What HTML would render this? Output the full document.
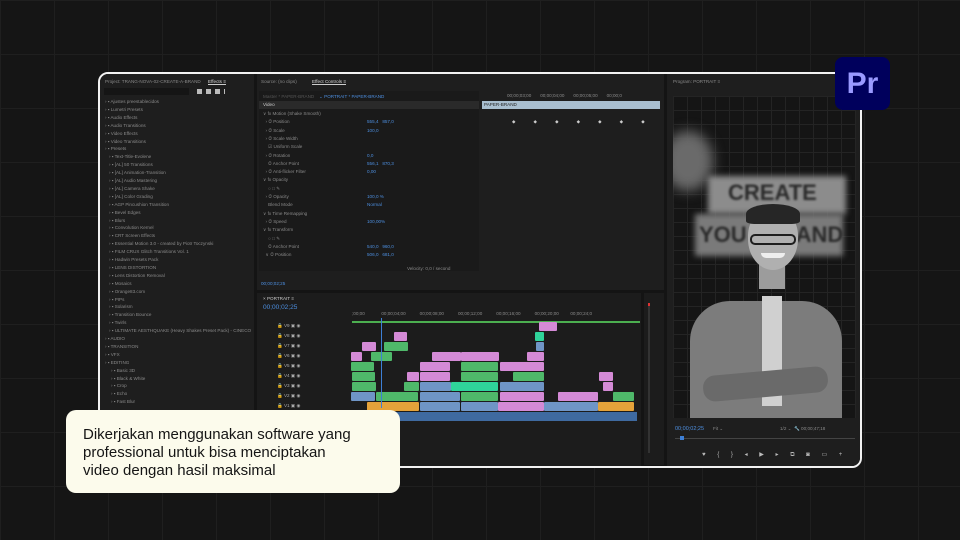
<!DOCTYPE html>
<html><head><meta charset="utf-8"><style>
*{margin:0;padding:0;box-sizing:border-box}
body{width:960px;height:540px;overflow:hidden;background:#151515;font-family:"Liberation Sans",sans-serif;position:relative}
.grid{position:absolute;inset:0;background-image:linear-gradient(#242424 1px,transparent 1px),linear-gradient(90deg,#242424 1px,transparent 1px);background-size:54px 54px;opacity:.7}
.win{position:absolute;left:98px;top:72px;width:764px;height:396px;border:2.5px solid #f2f2f2;border-radius:10px;background:#141414;overflow:hidden}
.p{position:absolute;background:#1f1f1f}
.t{position:absolute;font-size:4.6px;color:#8a8a8a;white-space:nowrap}
.b{color:#4d8fe0}
.c{position:absolute;height:9px;border-radius:1px}
.pk{background:#d48ad6}.gr{background:#4fb86a}.bl{background:#6f95c6}.or{background:#e4a23a}.tq{background:#2fd39a}
</style></head><body>
<div class="grid"></div>
<div class="win">
 <div class="p" style="left:0;top:0;width:154px;height:392px;background:#1e1e1e">
  <div class="t" style="left:5px;top:5px">Project: TRANG-NOVA-02-CREATE-A-BRAND</div>
  <div class="t" style="left:108px;top:5px;color:#ddd;border-bottom:1px solid #ccc">Effects ≡</div>
  <div style="position:absolute;left:4px;top:14px;width:85px;height:7px;background:#151515"></div>
  <div style="position:absolute;left:97px;top:15px;width:28px;height:5px;background:repeating-linear-gradient(90deg,#bbb 0 5px,transparent 5px 9px)"></div>
  <div id="list"></div>
 </div>
 <div class="p" style="left:157px;top:0;width:407px;height:216px;background:#1e1e1e">
  <div class="t" style="left:4px;top:5px">Source: (no clips)</div>
  <div class="t" style="left:55px;top:5px;color:#ddd;border-bottom:1px solid #ccc">Effect Controls ≡</div>
  <div style="position:absolute;left:2px;top:17px;width:220px;height:180px;background:#1a1a1a"></div>
  <div class="t" style="left:6px;top:20px;color:#555">Master * PAPER-BRAND</div>
  <div class="t b" style="left:62px;top:20px">⌄ PORTRAIT * PAPER-BRAND</div>
  <div style="position:absolute;left:2px;top:27px;width:220px;height:8px;background:#2a2a2a"></div>
  <div class="t" style="left:6px;top:28px;color:#ccc">Video</div>
  <div id="ec"></div>
  <div style="position:absolute;left:225px;top:27px;width:178px;height:8px;background:#a9bfd0"></div>
  <div class="t" style="left:227px;top:28px;color:#222">PAPER-BRAND</div>
  <div class="t" style="left:250px;top:19px">00;00;03;00 &nbsp; &nbsp; &nbsp; 00;00;04;00 &nbsp; &nbsp; &nbsp; 00;00;05;00 &nbsp; &nbsp; &nbsp; 00;00;0</div>
  <div class="t" style="left:255px;top:45px;color:#ccc;letter-spacing:18px">◆◆◆◆◆◆◆</div>
  <div class="t b" style="left:4px;top:207px">00;00;02;25</div>
 </div>
 <div class="p" style="left:157px;top:219px;width:384px;height:180px;background:#1c1c1c">
  <div class="t" style="left:6px;top:3px;color:#ccc">× PORTRAIT ≡</div>
  <div class="t b" style="left:6px;top:11px;font-size:6.5px">00;00;02;25</div>
  <div style="position:absolute;left:95px;top:28px;width:288px;height:2px;background:#4caf50"></div>
  <div class="t" style="left:95px;top:18px">;00;00 &nbsp; &nbsp; &nbsp; &nbsp; &nbsp; &nbsp; 00;00;04;00 &nbsp; &nbsp; &nbsp; &nbsp; &nbsp; 00;00;08;00 &nbsp; &nbsp; &nbsp; &nbsp; &nbsp; 00;00;12;00 &nbsp; &nbsp; &nbsp; &nbsp; &nbsp; 00;00;16;00 &nbsp; &nbsp; &nbsp; &nbsp; &nbsp; 00;00;20;00 &nbsp; &nbsp; &nbsp; &nbsp; 00;00;24;0</div>
  <div id="trk"></div>
  <div style="position:absolute;left:95px;top:119px;width:285px;height:9px;background:#3f6aa0"></div>
 </div>
 <div style="position:absolute;left:281px;top:244px;width:1px;height:90px;background:#3d7fd6"></div>
 <div class="p" style="left:544px;top:219px;width:20px;height:172px;background:#1c1c1c">
  <div style="position:absolute;left:4px;top:10px;width:2px;height:150px;background:#333"></div>
  <div style="position:absolute;left:4px;top:10px;width:2px;height:3px;background:#d33"></div>
 </div>
 <div class="p" style="left:567px;top:0;width:195px;height:392px;background:#1e1e1e">
  <div class="t" style="left:6px;top:5px">Program: PORTRAIT ≡</div>
  <div style="position:absolute;left:6px;top:22px;width:183px;height:322px;background:#151515;background-image:linear-gradient(#242424 1px,transparent 1px),linear-gradient(90deg,#242424 1px,transparent 1px);background-size:14px 14px;overflow:hidden">
   <div style="position:absolute;left:-10px;top:35px;width:50px;height:60px;background:#6a6a6a;border-radius:50%;filter:blur(6px)"></div>
   <div style="position:absolute;left:35px;top:80px;width:138px;height:38px;background:#8c8c8c;filter:blur(3px)"></div>
   <div style="position:absolute;left:22px;top:118px;width:148px;height:42px;background:#7a7a7a;filter:blur(3px)"></div>
   <div style="position:absolute;left:55px;top:84px;font:bold 22px 'Liberation Sans';color:#2a2a2a;filter:blur(1px)">CREATE</div>
   <div style="position:absolute;left:26px;top:126px;font:bold 22px 'Liberation Sans';color:#2a2a2a;filter:blur(1px)">YOU &nbsp; &nbsp; &nbsp; &nbsp;AND</div>
   <div style="position:absolute;left:17px;top:205px;width:152px;height:130px;background:#7c7c7c;border-radius:40px 40px 0 0"></div>
   <div style="position:absolute;left:89px;top:200px;width:20px;height:110px;background:#d0d0d0"></div>
   <div style="position:absolute;left:30px;top:275px;width:125px;height:26px;background:#6a6a6a;border-radius:12px;transform:rotate(-5deg)"></div>
   <div style="position:absolute;left:86px;top:165px;width:26px;height:28px;background:#9c9c9c"></div>
   <div style="position:absolute;left:75px;top:112px;width:50px;height:62px;background:#b0b0b0;border-radius:45% 45% 50% 50%"></div>
   <div style="position:absolute;left:73px;top:108px;width:54px;height:20px;background:#262626;border-radius:50% 50% 15% 15%"></div>
   <div style="position:absolute;left:77px;top:138px;width:46px;height:11px;border:2px solid #1e1e1e;border-radius:5px"></div>
   <div style="position:absolute;left:88px;top:157px;width:24px;height:5px;background:#eee;border-radius:0 0 8px 8px"></div>
  </div>
  <div class="t b" style="left:8px;top:352px;font-size:5.5px">00;00;02;25</div>
  <div class="t" style="left:46px;top:352px">Fit ⌄</div>
  <div class="t" style="left:113px;top:352px">1/2 ⌄ &nbsp;🔧 00;00;47;18</div>
  <div style="position:absolute;left:8px;top:364px;width:180px;height:1px;background:#444"></div>
  <div style="position:absolute;left:13px;top:362px;width:4px;height:4px;background:#3d7fd6"></div>
  <div class="t" style="left:35px;top:377px;font-size:6px;color:#bbb;letter-spacing:5px">♥ { } ◂ ▶ ▸ ⧉ ◙ ▭ +</div>
 </div>
</div>
<div style="position:absolute;left:835px;top:57px;width:55px;height:53px;border-radius:8px;background:#00005c;color:#9a9aff;font:bold 30px 'Liberation Sans';text-align:center;line-height:53px">Pr</div>
<div style="position:absolute;left:66px;top:410px;width:334px;height:83px;border-radius:10px;background:#fcfbec;color:#151515;font-size:15px;line-height:18px;padding:16px 0 0 17px">Dikerjakan menggunakan software yang<br>professional untuk bisa menciptakan<br>video dengan hasil maksimal</div>
<script>
var L=["Ajustes preestablecidos","Lumetri Presets","Audio Effects","Audio Transitions","Video Effects","Video Transitions","Presets","Text-Title-Evolene","[AL] 50 Transitions","[AL] Animation-Transition","[AL] Audio Mastering","[AL] Camera Shake","[AL] Color Grading","AGP Pincushion Transition","Bevel Edges","Blurs","Convolution Kernel","CRT Screen Effects","Essential Motion 3.0 - created by Piotr Toczynski","FILM CRUX Glitch Transitions Vol. 1","Hadwin Presets Pack","LENS DISTORTION","Lens Distortion Removal","Mosaics","Orange83.com","PIPs","Solarism","Transition Bounce","Twirls","ULTIMATE AESTHQUAKE (Heavy Shakes Preset Pack) - CINECO","AUDIO","TRANSITION","VFX","EDITING","Basic 3D","Black & White","Crop","Echo","Fast Blur"];
var h="";L.forEach(function(s,i){var ind=i<7?5:(i<30?9:(i<34?5:11));h+='<div class="t" style="left:'+ind+'px;top:'+(25+i*7.9)+'px">› ▪ '+s+'</div>'});
document.getElementById("list").innerHTML=h;
var E=[["∨ fx Motion (Shake Smooth)",""],["  › ⏱ Position","555,4 &nbsp; 857,0"],["  › ⏱ Scale","100,0"],["  › ⏱ Scale Width",""],["    ☑ Uniform Scale",""],["  › ⏱ Rotation","0,0"],["    ⏱ Anchor Point","556,1 &nbsp; 870,3"],["  › ⏱ Anti-flicker Filter","0,00"],["∨ fx Opacity",""],["    ○ □ ✎",""],["  › ⏱ Opacity","100,0 %"],["    Blend Mode","Normal"],["∨ fx Time Remapping",""],["  › ⏱ Speed","100,00%"],["∨ fx Transform",""],["    ○ □ ✎",""],["    ⏱ Anchor Point","540,0 &nbsp; 960,0"],["  ∨ ⏱ Position","506,0 &nbsp; 681,0"]];
h="";E.forEach(function(e,i){h+='<div class="t" style="left:6px;top:'+(37+i*8.3)+'px;white-space:pre">'+e[0]+'</div><div class="t b" style="left:110px;top:'+(37+i*8.3)+'px">'+e[1]+'</div>'});
h+='<div class="t" style="left:150px;top:192px">Velocity: 0,0 / second</div>';
document.getElementById("ec").innerHTML=h;
var C=[[0,540,558,"pk"],[1,395,408,"pk"],[1,536,545,"tq"],[2,363,377,"pk"],[2,385,409,"gr"],[2,537,545,"bl"],[3,352,363,"pk"],[3,372,393,"gr"],[3,433,462,"pk"],[3,462,500,"pk"],[3,528,545,"pk"],[4,352,375,"gr"],[4,421,451,"pk"],[4,462,499,"gr"],[4,501,545,"pk"],[5,353,376,"gr"],[5,408,420,"pk"],[5,421,451,"pk"],[5,462,499,"gr"],[5,514,545,"gr"],[5,600,614,"pk"],[6,353,377,"gr"],[6,405,420,"gr"],[6,421,452,"bl"],[6,452,499,"tq"],[6,501,545,"bl"],[6,604,614,"pk"],[7,352,376,"bl"],[7,377,419,"gr"],[7,421,461,"bl"],[7,462,499,"gr"],[7,501,545,"pk"],[7,559,599,"pk"],[7,614,635,"gr"],[8,368,420,"or"],[8,421,461,"bl"],[8,462,499,"bl"],[8,499,545,"pk"],[8,545,599,"bl"],[8,599,635,"or"]];
h="";for(var r=0;r<9;r++){h+='<div class="t" style="left:20px;top:'+(30+r*10)+'px;color:#aaa">🔒 V'+(9-r)+' ▣ ◉</div>';}
C.forEach(function(c){h+='<div class="c '+c[3]+'" style="left:'+(c[1]-258)+'px;top:'+(29+c[0]*10)+'px;width:'+(c[2]-c[1])+'px"></div>'});
document.getElementById("trk").innerHTML=h;
</script>
</body></html>
